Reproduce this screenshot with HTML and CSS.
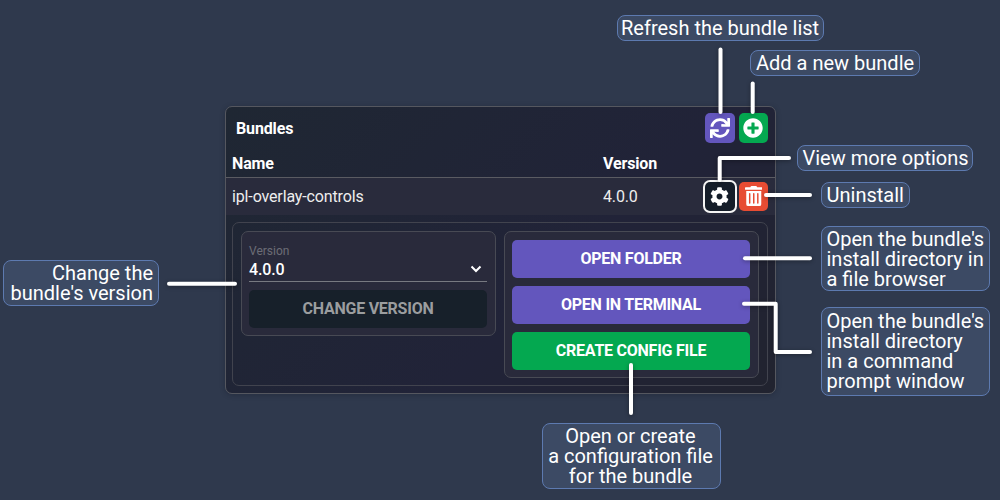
FILE: index.html
```html
<!DOCTYPE html>
<html lang="en">
<head>
<meta charset="utf-8">
<title>Bundles</title>
<link rel="stylesheet" href="styles.css">
</head>
<body>
<main class="stage">
  <section class="panel">
    <header class="panel-header">
      <h1 class="title">Bundles</h1>
      <div class="actions">
        <button class="icon-btn purple" aria-label="Refresh"><svg class="icon" viewBox="0 0 512 512"><path d="M440.65 12.57l4 82.77A247.16 247.16 0 0 0 255.83 8C134.73 8 33.91 94.92 12.29 209.82A12 12 0 0 0 24.09 224h49.05a12 12 0 0 0 11.67-9.26 175.91 175.91 0 0 1 317-56.94l-101.46-4.86a12 12 0 0 0-12.57 12v47.41a12 12 0 0 0 12 12H500a12 12 0 0 0 12-12V12a12 12 0 0 0-12-12h-47.37a12 12 0 0 0-11.98 12.57zM255.83 432a175.61 175.61 0 0 1-146-77.8l101.8 4.87a12 12 0 0 0 12.57-12v-47.4a12 12 0 0 0-12-12H12a12 12 0 0 0-12 12V500a12 12 0 0 0 12 12h47.35a12 12 0 0 0 12-12.6l-4.15-82.57A247.17 247.17 0 0 0 255.83 504c121.11 0 221.93-86.92 243.55-201.82a12 12 0 0 0-11.8-14.18h-49.05a12 12 0 0 0-11.67 9.26A175.86 175.86 0 0 1 255.83 432z"/></svg></button>
        <button class="icon-btn green" aria-label="Add"><svg class="icon" viewBox="0 0 512 512"><path d="M256 8C119 8 8 119 8 256s111 248 248 248 248-111 248-248S393 8 256 8zm144 276c0 6.6-5.4 12-12 12h-92v92c0 6.6-5.4 12-12 12h-56c-6.6 0-12-5.4-12-12v-92h-92c-6.6 0-12-5.4-12-12v-56c0-6.6 5.4-12 12-12h92v-92c0-6.6 5.4-12 12-12h56c6.6 0 12 5.4 12 12v92h92c6.6 0 12 5.4 12 12v56z"/></svg></button>
      </div>
    </header>
    <div class="row head-row"><span class="col-name">Name</span><span>Version</span></div>
    <div class="row bundle-row">
      <span class="col-name">ipl-overlay-controls</span><span>4.0.0</span>
      <div class="actions row-actions">
        <button class="icon-btn dark" aria-label="Options"><svg class="icon" viewBox="0 0 512 512"><path d="M487.4 315.7l-42.6-24.6c4.3-23.2 4.3-47 0-70.2l42.6-24.6c4.9-2.8 7.1-8.6 5.5-14-11.1-35.6-30-67.8-54.7-94.6-3.8-4.1-10-5.1-14.8-2.3L380.8 110c-17.9-15.4-38.5-27.3-60.8-35.1V25.8c0-5.6-3.9-10.5-9.4-11.7-36.7-8.2-74.3-7.8-109.2 0-5.5 1.2-9.4 6.1-9.4 11.7V75c-22.2 7.9-42.8 19.8-60.8 35.1L88.7 85.5c-4.9-2.8-11-1.9-14.8 2.3-24.7 26.7-43.6 58.9-54.7 94.6-1.7 5.4.6 11.2 5.5 14L67.3 221c-4.3 23.2-4.3 47 0 70.2l-42.6 24.6c-4.9 2.8-7.1 8.6-5.5 14 11.1 35.6 30 67.8 54.7 94.6 3.8 4.1 10 5.1 14.8 2.3l42.6-24.6c17.9 15.4 38.5 27.3 60.8 35.1v49.2c0 5.6 3.9 10.5 9.4 11.7 36.7 8.2 74.3 7.8 109.2 0 5.5-1.2 9.4-6.1 9.4-11.7v-49.2c22.2-7.9 42.8-19.8 60.8-35.1l42.6 24.6c4.9 2.8 11 1.9 14.8-2.3 24.7-26.7 43.6-58.9 54.7-94.6 1.5-5.5-.7-11.3-5.6-14.1zM256 336c-44.1 0-80-35.9-80-80s35.9-80 80-80 80 35.9 80 80-35.9 80-80 80z"/></svg></button>
        <button class="icon-btn red" aria-label="Uninstall"><svg class="icon" viewBox="0 0 448 512"><path fill-rule="evenodd" d="M32 464a48 48 0 0 0 48 48h288a48 48 0 0 0 48-48V128H32zM101 196a19 19 0 0 1 38 0v240a19 19 0 0 1-38 0zM205 196a19 19 0 0 1 38 0v240a19 19 0 0 1-38 0zM309 196a19 19 0 0 1 38 0v240a19 19 0 0 1-38 0zM432 32H312l-9.400-18.700A24 24 0 0 0 281.100 0H166.800a23.720 23.720 0 0 0-21.400 13.300L136 32H16A16 16 0 0 0 0 48v32a16 16 0 0 0 16 16h416a16 16 0 0 0 16-16V48a16 16 0 0 0-16-16z"/></svg></button>
      </div>
    </div>
    <div class="details">
      <div class="card">
        <div class="field-label">Version</div>
        <div class="select"><span>4.0.0</span><svg class="chevron" viewBox="0 0 12 8"><path d="M1.500 1.500L6 6l4.500-4.500"/></svg></div>
        <button class="btn disabled">CHANGE VERSION</button>
      </div>
      <div class="card buttons">
        <button class="btn purple">OPEN FOLDER</button>
        <button class="btn purple">OPEN IN TERMINAL</button>
        <button class="btn green">CREATE CONFIG FILE</button>
      </div>
    </div>
  </section>

  <svg class="connectors" viewBox="0 0 1000 500">
    <path d="M720.500 49.500V112"/>
    <path d="M752.700 83.500V112"/>
    <path d="M719.700 180V158H789"/>
    <path d="M766 195H810"/>
    <path d="M169 283.700H235"/>
    <path d="M745 258.300H810"/>
    <path d="M744 303.700H775.700V352H810"/>
    <path d="M631 365V413"/>
  </svg>

  <div class="note note-refresh">Refresh the bundle list</div>
  <div class="note note-add">Add a new bundle</div>
  <div class="note note-options">View more options</div>
  <div class="note note-uninstall">Uninstall</div>
  <div class="note note-version">Change the<br>bundle's version</div>
  <div class="note note-folder">Open the bundle's<br>install directory in<br>a file browser</div>
  <div class="note note-terminal">Open the bundle's<br>install directory<br>in a command<br>prompt window</div>
  <div class="note note-config">Open or create<br>a configuration file<br>for the bundle</div>
</main>
</body>
</html>
```
FILE: styles.css
```css
* { box-sizing: border-box; }
body { margin: 0; background: #2f394d; font-family: Roboto, sans-serif; color: #fff; }
.stage { position: relative; width: 1000px; height: 500px; padding: 105.500px 0 0 224.500px; overflow: hidden; }
.panel {
  width: 551px; height: 288.500px;
  border: 1px solid #55575f; border-radius: 7px;
  background: linear-gradient(135deg, #1f2733, #212338 60%, #21232f);
  box-shadow: 0 1px 5px rgba(20, 25, 40, .35);
  font-size: 16px; letter-spacing: -.14px;
}
.panel-header { display: flex; align-items: center; justify-content: space-between; height: 43px; padding: 0 6.500px 0 10.500px; }
.title { margin: 0; font-size: 16px; font-weight: 700; }
.actions { display: flex; gap: 4px; }
.icon-btn { display: flex; align-items: center; justify-content: center; width: 29.500px; height: 29.500px; padding: 0; border: 0; border-radius: 5px; }
.icon { height: 20px; fill: #fff; }
.purple { background: #6356bd; }
.green { background: #04a850; }
.red { background: #e74c33; }
.dark { background: #151d29; box-shadow: 0 0 0 2px #f5f5f5; }
.dark .icon { height: 19px; }
.row { display: flex; align-items: center; padding: 0 6.500px; }
.head-row { height: 28px; border-bottom: 1px solid #5a5b62; font-weight: 700; }
.bundle-row { height: 37.500px; background: #292b3c; color: #eee; }
.col-name { width: 371px; }
.row-actions { margin-left: auto; }
.details { display: flex; gap: 8px; align-items: flex-start; height: 164px; margin: 7px 7px 0 6px; padding: 8px; border: 1px solid #41434e; border-radius: 7px; }
.card { flex: 1; padding: 7.500px; border: 1px solid #484a54; border-radius: 7px; background: #292a3b; }
.field-label { margin-top: 4px; font-size: 12px; line-height: 14px; letter-spacing: 0; color: #6c6d76; }
.select { display: flex; align-items: center; justify-content: space-between; height: 24px; padding-right: 5px; border-bottom: 1px solid #777981; font-weight: 500; }
.chevron { width: 12px; height: 8px; fill: none; stroke: #fff; stroke-width: 2; }
.btn { display: block; width: 100%; height: 38px; padding: 0; border: 0; border-radius: 5px; color: #fff; font: 700 16px Roboto, sans-serif; letter-spacing: -.24px; }
.disabled { margin-top: 8px; background: #17202a; color: #9b9d9f; }
.buttons { display: flex; flex-direction: column; gap: 8px; }
.connectors { position: absolute; inset: 0; width: 1000px; height: 500px; fill: none; stroke: #fff; stroke-width: 4; stroke-linecap: round; stroke-linejoin: round; filter: drop-shadow(0 1px 2px rgba(0, 0, 0, .35)); }
.note { position: absolute; display: flex; align-items: center; border: 1px solid #5d7ab0; border-radius: 8px; background: #3c4a64; font-size: 20px; line-height: 20px; white-space: nowrap; padding-left: 5px; }
.note-refresh { left: 617px; top: 15px; width: 207px; height: 26px; padding-left: 3px; }
.note-add { left: 750px; top: 49.500px; width: 169.500px; height: 26px; }
.note-options { left: 796.500px; top: 145px; width: 176.500px; height: 26px; }
.note-uninstall { left: 820.500px; top: 182px; width: 89px; height: 26px; }
.note-version { left: 3px; top: 260px; width: 156px; height: 45.500px; justify-content: flex-end; text-align: right; padding: 0 5px 0 0; }
.note-folder { left: 820.500px; top: 226px; width: 169.500px; height: 65px; }
.note-terminal { left: 820.500px; top: 307px; width: 169.500px; height: 88.500px; }
.note-config { left: 541.500px; top: 423px; width: 179px; height: 66px; justify-content: center; text-align: center; padding: 0 1px 0 0; }
```
